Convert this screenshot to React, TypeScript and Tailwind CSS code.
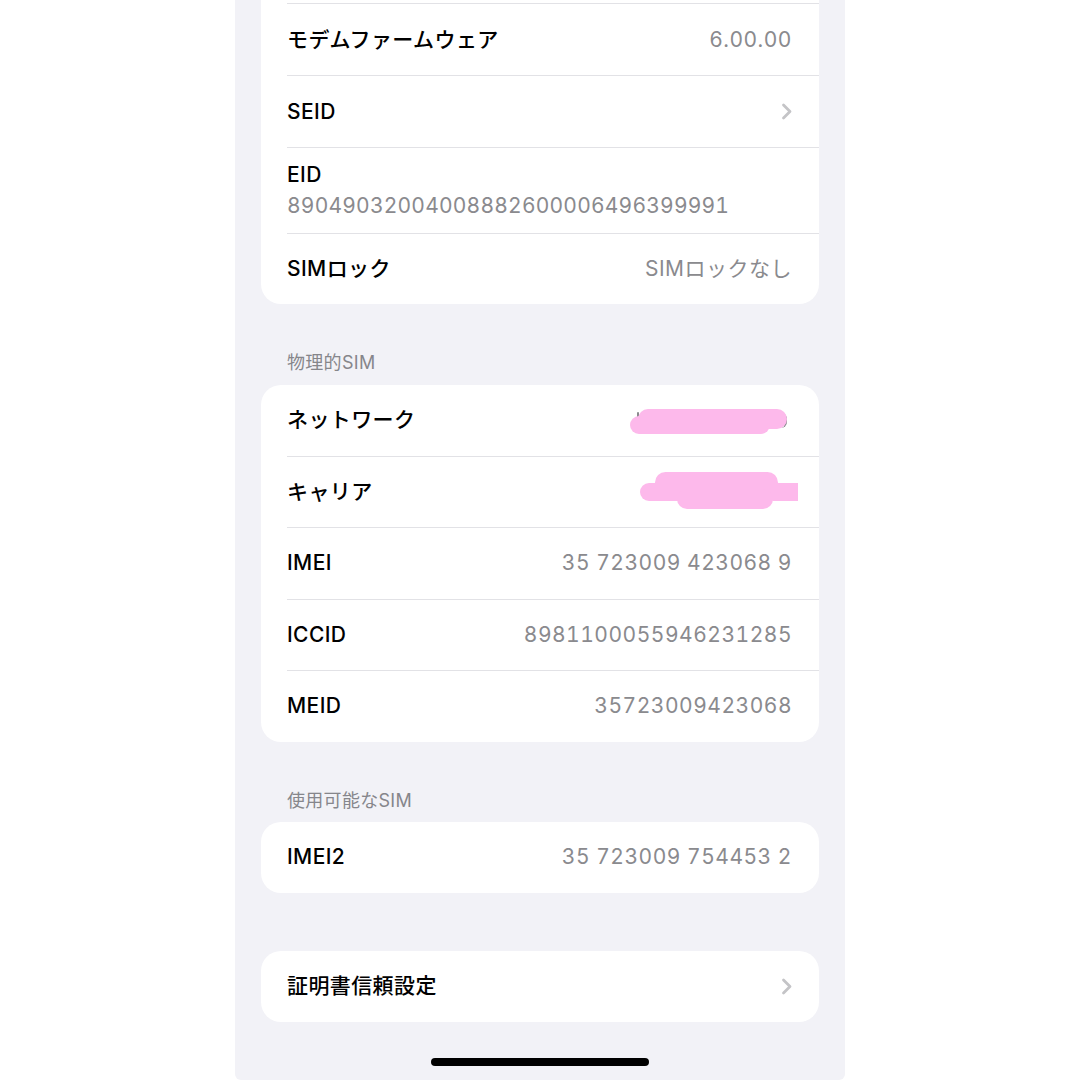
import type { ReactNode } from "react";

const jp = { fontFamily: '"Inter", "Noto Sans CJK JP", sans-serif' };
const num = { fontFamily: '"Inter", "Noto Sans CJK JP", sans-serif', fontVariantNumeric: "tabular-nums" };

function Chevron() {
  return (
    <svg width="12" height="17" viewBox="0 0 12 17" fill="none" className="mr-[-1px]">
      <path d="M2.5 2 L9 8.5 L2.5 15" stroke="#c4c4c7" strokeWidth="2.8" strokeLinecap="round" strokeLinejoin="round" />
    </svg>
  );
}

function Separator() {
  return <div className="ml-[26px] h-px bg-[#e2e2e6]" />;
}

function Row({
  label,
  value,
  chevron,
  h = "h-[71px]",
  children,
}: {
  label: string;
  value?: string;
  chevron?: boolean;
  h?: string;
  children?: ReactNode;
}) {
  return (
    <div className={`relative flex items-center justify-between pl-[26px] pr-[27px] ${h}`}>
      <span className="text-[21px] font-medium leading-[26px] tracking-[0.4px] text-black" style={jp}>
        {label}
      </span>
      {value ? (
        <span className="text-[21px] leading-[26px] tracking-[0.5px] text-[#8a8a8e]" style={num}>
          {value}
        </span>
      ) : null}
      {chevron ? <Chevron /> : null}
      {children}
    </div>
  );
}

function Header({ title, h, pb }: { title: string; h: string; pb: string }) {
  return (
    <div className={`flex items-end pl-[52px] ${h} ${pb}`}>
      <span className="text-[18px] leading-[22px] tracking-[0.3px] text-[#86868b]" style={jp}>
        {title}
      </span>
    </div>
  );
}

export default function App() {
  return (
    <div className="flex min-h-[1080px] justify-center bg-white">
      <div className="flex h-[1080px] w-[610px] flex-col overflow-hidden rounded-b-[6px] bg-[#f2f2f7]">
        <div className="mx-[26px] rounded-b-[20px] bg-white pt-[3px]">
          <Separator />
          <Row label="モデムファームウェア" value="6.00.00" />
          <Separator />
          <Row label="SEID" chevron />
          <Separator />
          <div className="flex h-[85px] flex-col justify-center gap-[4px] pl-[26px] pr-[27px]">
            <span className="text-[21px] font-medium leading-[26px] tracking-[0.4px] text-black" style={jp}>
              EID
            </span>
            <span className="text-[21px] leading-[28px] tracking-[0.2px] text-[#8a8a8e]" style={num}>
              89049032004008882600006496399991
            </span>
          </div>
          <Separator />
          <Row label="SIMロック" value="SIMロックなし" h="h-[70px]" />
        </div>

        <Header title="物理的SIM" h="h-[81px]" pb="pb-[11px]" />
        <div className="mx-[26px] rounded-[20px] bg-white">
          <Row label="ネットワーク" h="h-[70.5px]">
            <div className="absolute left-[376px] top-[27px] h-[7px] w-[2px] rounded bg-[#8a8a8e]" />
            <div className="absolute left-[520px] top-[28px] h-[15px] w-[6px] rounded-r-full border-r-2 border-[#8a8a8e]" />
            <div className="absolute left-[377px] top-[24px] h-[20px] w-[149px] rounded-[10px] bg-[#fdb9eb]" />
            <div className="absolute left-[369px] top-[31px] h-[18px] w-[140px] rounded-full bg-[#fdb9eb]" />
          </Row>
          <Separator />
          <Row label="キャリア" h="h-[70.5px]">
            <div className="absolute left-[394px] top-[15px] h-[21px] w-[123px] rounded-[11px] bg-[#fdb9eb]" />
            <div className="absolute left-[379px] top-[26px] h-[18px] w-[140px] rounded-full bg-[#fdb9eb]" />
            <div className="absolute left-[416px] top-[32px] h-[20px] w-[96px] rounded-full bg-[#fdb9eb]" />
            <div className="absolute left-[512px] top-[26px] h-[18px] w-[25px] bg-[#fdb9eb]" />
          </Row>
          <Separator />
          <Row label="IMEI" value="35 723009 423068 9" h="h-[70.5px]" />
          <Separator />
          <Row label="ICCID" value="8981100055946231285" h="h-[70.5px]" />
          <Separator />
          <Row label="MEID" value="35723009423068" h="h-[70.5px]" />
        </div>

        <Header title="使用可能なSIM" h="h-[80px]" pb="pb-[10px]" />
        <div className="mx-[26px] rounded-[20px] bg-white">
          <Row label="IMEI2" value="35 723009 754453 2" />
        </div>

        <div className="mx-[26px] mt-[58px] rounded-[20px] bg-white">
          <Row label="証明書信頼設定" chevron />
        </div>

        <div className="mx-auto mt-[36px] h-[8px] w-[218px] rounded-full bg-black" />
      </div>
    </div>
  );
}
